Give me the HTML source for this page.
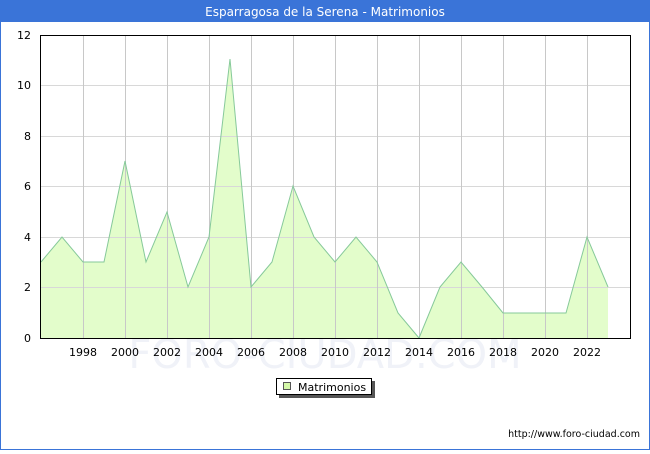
<!DOCTYPE html>
<html><head><meta charset="utf-8"><style>
body{margin:0;width:650px;height:450px;overflow:hidden;background:#fff;font-family:"DejaVu Sans","Liberation Sans",sans-serif;}
</style></head><body>
<svg width="650" height="450" xmlns="http://www.w3.org/2000/svg" font-family="DejaVu Sans, Liberation Sans, sans-serif">
<rect x="0.5" y="0.5" width="649" height="449" fill="#fff" stroke="#3a74d8"/>
<rect x="0" y="0" width="650" height="22" fill="#3a74d8"/>
<text x="325" y="16" text-anchor="middle" font-size="12" fill="#fff">Esparragosa de la Serena - Matrimonios</text>
<text x="325" y="368" text-anchor="middle" font-size="40" fill="#f0f2f8">FORO-CIUDAD.COM</text>
<polygon fill="#e3fdcb" points="41,338 41,262 62,237 83,262 104,262 125,161 146,262 167,212 188,287 209,237 230,59 251,287 272,262 293,186 314,237 335,262 356,237 377,262 398,313 419,338 440,287 461,262 482,287 503,313 524,313 545,313 566,313 587,237 608,287 608,338"/>
<g stroke="#d8d8d8" stroke-width="1">
<line x1="41" y1="287.5" x2="630" y2="287.5"/><line x1="41" y1="237.5" x2="630" y2="237.5"/><line x1="41" y1="186.5" x2="630" y2="186.5"/><line x1="41" y1="136.5" x2="630" y2="136.5"/><line x1="41" y1="85.5" x2="630" y2="85.5"/>
</g>
<g stroke="#c8c8c8" stroke-width="1">
<line x1="83.5" y1="35" x2="83.5" y2="338"/><line x1="125.5" y1="35" x2="125.5" y2="338"/><line x1="167.5" y1="35" x2="167.5" y2="338"/><line x1="209.5" y1="35" x2="209.5" y2="338"/><line x1="251.5" y1="35" x2="251.5" y2="338"/><line x1="293.5" y1="35" x2="293.5" y2="338"/><line x1="335.5" y1="35" x2="335.5" y2="338"/><line x1="377.5" y1="35" x2="377.5" y2="338"/><line x1="419.5" y1="35" x2="419.5" y2="338"/><line x1="461.5" y1="35" x2="461.5" y2="338"/><line x1="503.5" y1="35" x2="503.5" y2="338"/><line x1="545.5" y1="35" x2="545.5" y2="338"/><line x1="587.5" y1="35" x2="587.5" y2="338"/>
</g>
<polyline fill="none" stroke="#86c99a" stroke-width="1" points="41,262 62,237 83,262 104,262 125,161 146,262 167,212 188,287 209,237 230,59 251,287 272,262 293,186 314,237 335,262 356,237 377,262 398,313 419,338 440,287 461,262 482,287 503,313 524,313 545,313 566,313 587,237 608,287"/>
<rect x="40.5" y="35.5" width="590" height="303" fill="none" stroke="#000"/>
<g font-size="11" fill="#000" text-anchor="end">
<text x="31" y="342">0</text><text x="31" y="291">2</text><text x="31" y="241">4</text><text x="31" y="190">6</text><text x="31" y="140">8</text><text x="31" y="89">10</text><text x="31" y="39">12</text>
</g>
<g font-size="11" fill="#000" text-anchor="middle">
<text x="83" y="356">1998</text><text x="125" y="356">2000</text><text x="167" y="356">2002</text><text x="209" y="356">2004</text><text x="251" y="356">2006</text><text x="293" y="356">2008</text><text x="335" y="356">2010</text><text x="377" y="356">2012</text><text x="419" y="356">2014</text><text x="461" y="356">2016</text><text x="503" y="356">2018</text><text x="545" y="356">2020</text><text x="587" y="356">2022</text>
</g>
<rect x="279" y="381" width="96" height="17" fill="#555"/>
<rect x="276.5" y="378.5" width="95" height="16" fill="#fff" stroke="#000"/>
<rect x="283.5" y="382.5" width="7" height="7" fill="#d4f8a8" stroke="#555"/>
<text x="298" y="391" font-size="11" fill="#000">Matrimonios</text>
<text x="640" y="437" text-anchor="end" font-size="9.5" fill="#000">http://www.foro-ciudad.com</text>
</svg>
</body></html>
